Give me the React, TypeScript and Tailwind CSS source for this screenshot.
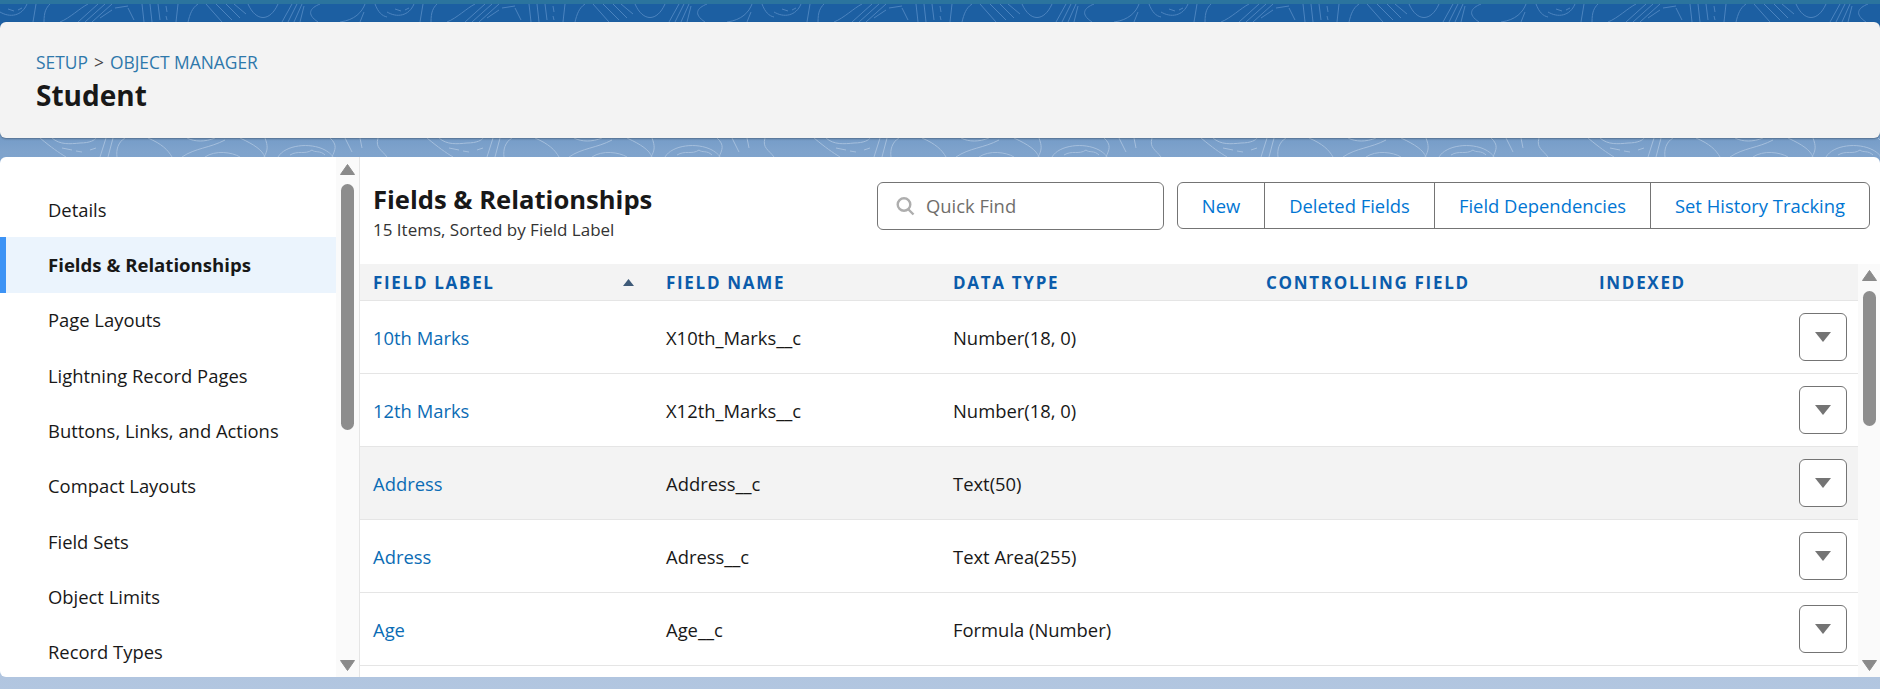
const font = "font-['Open_Sans','Noto_Sans',sans-serif]";

const sideItems = [
  "Details",
  "Fields & Relationships",
  "Page Layouts",
  "Lightning Record Pages",
  "Buttons, Links, and Actions",
  "Compact Layouts",
  "Field Sets",
  "Object Limits",
  "Record Types",
];

const rows = [
  { label: "10th Marks", name: "X10th_Marks__c", type: "Number(18, 0)" },
  { label: "12th Marks", name: "X12th_Marks__c", type: "Number(18, 0)" },
  { label: "Address", name: "Address__c", type: "Text(50)", hover: true },
  { label: "Adress", name: "Adress__c", type: "Text Area(255)" },
  { label: "Age", name: "Age__c", type: "Formula (Number)" },
];

const gridCols = "grid-cols-[293px_287px_313px_333px_1fr]";

const topLines =
  "M0 12 C10 18 22 16 27 4 M8 9 L14 11 M18 10 L22 8 M33 22 L36 4 M44 22 C44 12 46 8 50 4 M60 22 C70 18 80 8 88 4 M78 22 L98 4 M85 22 L105 4 M92 22 L112 4 M100 18 L112 10 M115 8 L128 6 M128 8 L134 20 M142 4 L144 22 M150 4 L152 22 M158 4 L160 20 M166 6 L167 12 M166 16 L167 20 M178 4 L176 22 M188 22 C190 14 192 8 198 4 M206 4 L222 22 M216 4 L232 20 M226 4 L240 18 M234 4 L246 14 M248 4 C256 22 270 22 278 4 M282 22 L292 4 M288 22 L297 4 M294 22 L302 4 M300 22 L304 6 M318 22 C306 14 310 8 320 4 M340 22 C355 20 362 12 365 4 M360 22 L364 12 M375 4 C378 12 382 16 387 17";

const bandLines =
  "M40 138 C52 148 58 152 66 157 M52 138 C60 145 70 144 80 143 C90 143 95 140 96 138 M62 148 L72 150 M76 151 L82 152 M90 150 L96 148 M106 138 L100 157 M113 138 L108 157 M125 138 C118 142 116 150 117 157 M148 138 C162 144 168 150 172 157 M187 138 C195 142 205 142 215 138 M182 157 C195 148 210 148 225 140 M205 157 C215 150 232 152 240 157 M240 138 C255 145 262 150 265 157 M265 138 C268 146 268 150 264 157 M278 157 C285 145 310 142 325 150 C330 153 332 155 333 157 M290 155 C298 150 305 155 312 150 C315 153 320 150 325 155 M330 138 C338 145 335 150 332 157 M345 138 L352 152 M360 138 L362 148 M378 138 C375 148 382 150 387 157";

function Arrow({ up, className }: { up?: boolean; className?: string }) {
  return (
    <svg width="15" height="11" viewBox="0 0 15 11" className={className}>
      <path d={up ? "M7.5 0.5 L14.5 10.5 H0.5 Z" : "M0.5 0.5 H14.5 L7.5 10.5 Z"} fill="#8a8a8a" strokeLinejoin="round" stroke="#8a8a8a" />
    </svg>
  );
}

function Contours({ d, y, h, stroke }: { d: string; y: number; h: number; stroke: string }) {
  return (
    <svg className="block h-full w-full" viewBox={`0 ${y} 1880 ${h}`}>
      {Array.from({ length: 5 }).map((_, i) => (
        <path key={i} d={d} transform={`translate(${i * 387} 0)`} fill="none" stroke={stroke} />
      ))}
    </svg>
  );
}

function Scrollbar({ thumbTop, thumbHeight, trackClass }: { thumbTop: string; thumbHeight: string; trackClass: string }) {
  return (
    <div className={`flex shrink-0 flex-col items-center justify-between ${trackClass}`}>
      <div className="flex flex-col items-center">
        <Arrow up className={thumbTop} />
        <div className={`w-[13px] rounded-full bg-[#8d8d8d] ${thumbHeight}`} />
      </div>
      <Arrow className="mb-[6px]" />
    </div>
  );
}

export default function App() {
  return (
    <div className={`${font} relative flex h-[689px] w-[1880px] flex-col overflow-hidden bg-gradient-to-b from-[#1b5fa3] from-[3%] via-[#7fa3cc] via-[22%] to-[#b2c6e0] text-[#181818]`}>
      <div className="absolute inset-x-0 top-0 h-[4px] bg-[#2b749e]" />
      <div className="absolute inset-x-0 top-[4px] h-[18px] bg-[#1c5fa2]">
        <Contours d={topLines} y={4} h={18} stroke="#4c84bf" />
      </div>
      <div className="absolute inset-x-0 top-[138px] h-[20px]">
        <Contours d={bandLines} y={138} h={20} stroke="#a5bfdd" />
      </div>

      <header className="relative mt-[22px] flex h-[116px] shrink-0 flex-col rounded-[6px] bg-[#f3f3f3] pl-9 pt-[29px] shadow-[0_1px_2px_rgba(0,0,0,0.3)]">
        <div className="flex items-center gap-[6px] text-[17.4px] leading-[22px] text-[#2e78ab]">
          <span>SETUP</span>
          <span className="text-[#444]">&gt;</span>
          <span>OBJECT MANAGER</span>
        </div>
        <h1 className="mt-[2px] text-[28px] font-bold leading-[40px] text-[#181818]">Student</h1>
      </header>

      <main className="relative mt-[19px] flex h-[520px] shrink-0 overflow-hidden rounded-t-[6px] rounded-bl-[6px] bg-white">
        <aside className="flex w-[360px] shrink-0 border-r border-[#e5e5e5]">
          <nav className="w-[336px] shrink-0 pt-[25px]">
            {sideItems.map((item) => {
              const active = item === "Fields & Relationships";
              return (
                <div
                  key={item}
                  className={`flex h-[55.3px] items-center pl-12 ${active ? "border-l-[6px] border-[#3d93f5] bg-[#ebf4fd] pl-[42px] text-[18.6px] font-bold" : "text-[18.4px]"}`}
                >
                  {item}
                </div>
              );
            })}
          </nav>
          <Scrollbar thumbTop="mt-[7px] mb-[9px]" thumbHeight="h-[246px]" trackClass="w-[23px] bg-[#fafafa]" />
        </aside>

        <section className="flex min-w-0 flex-1 flex-col">
          <div className="flex h-[107px] shrink-0 items-start justify-between pl-[13px] pr-[10px] pt-[25px]">
            <div>
              <h2 className="text-[25.6px] font-bold leading-[36px]">Fields &amp; Relationships</h2>
              <p className="text-[17px] leading-[24px] text-[#333]">15 Items, Sorted by Field Label</p>
            </div>
            <div className="flex items-start gap-[13px]">
              <div className="flex h-[48px] w-[287px] items-center gap-[11px] rounded-[6px] border border-[#747474] bg-white pl-[18px] text-[18.4px] text-[#706e6b]">
                <svg width="19" height="20" viewBox="0 0 19 20" fill="none" stroke="#aeaeae" strokeWidth="2.4">
                  <circle cx="8" cy="8.5" r="6.3" />
                  <path d="M12.5 13.5 L17.5 18.5" />
                </svg>
                <span>Quick Find</span>
              </div>
              <div className="flex h-[47px] items-stretch rounded-[6px] border border-[#747474] bg-white text-[18.4px] text-[#0176d3]">
                <div className="flex w-[86px] items-center justify-center">New</div>
                <div className="flex w-[170px] items-center justify-center border-l border-[#747474]">Deleted Fields</div>
                <div className="flex w-[216px] items-center justify-center border-l border-[#747474]">Field Dependencies</div>
                <div className="flex w-[219px] items-center justify-center border-l border-[#747474]">Set History Tracking</div>
              </div>
            </div>
          </div>

          <div className="flex min-h-0 flex-1">
            <div className="min-w-0 flex-1">
              <div className={`grid h-[37px] ${gridCols} items-center border-b border-[#e5e5e5] bg-[#f3f3f3] pl-[13px] pt-[1px] text-[17px] font-bold tracking-[1.7px] text-[#0b5cab]`}>
                <div className="flex items-center justify-between pr-[32px]">
                  <span>FIELD LABEL</span>
                  <svg width="11" height="7" viewBox="0 0 11 7"><path d="M5.5 0 L11 7 H0 Z" fill="#3e5a78" /></svg>
                </div>
                <span>FIELD NAME</span>
                <span>DATA TYPE</span>
                <span>CONTROLLING FIELD</span>
                <span>INDEXED</span>
              </div>
              {rows.map((row) => (
                <div
                  key={row.label}
                  className={`grid h-[73px] ${gridCols} items-center border-b border-[#e5e5e5] pl-[13px] text-[18.4px] ${row.hover ? "bg-[#f3f3f3]" : ""}`}
                >
                  <span className="pt-[2px] text-[#0b6cb5]">{row.label}</span>
                  <span className="pt-[2px]">{row.name}</span>
                  <span className="pt-[2px]">{row.type}</span>
                  <span />
                  <div className="flex justify-end pr-[11px]">
                    <div className="flex h-[48px] w-[48px] items-center justify-center rounded-[6px] border border-[#747474] bg-white">
                      <svg width="16" height="10" viewBox="0 0 16 10"><path d="M0 0 H16 L8 10 Z" fill="#747474" /></svg>
                    </div>
                  </div>
                </div>
              ))}
            </div>
            <Scrollbar thumbTop="mt-[6px] mb-[10px]" thumbHeight="h-[135px]" trackClass="w-[22px] bg-[#fafafa]" />
          </div>
        </section>
      </main>
    </div>
  );
}
